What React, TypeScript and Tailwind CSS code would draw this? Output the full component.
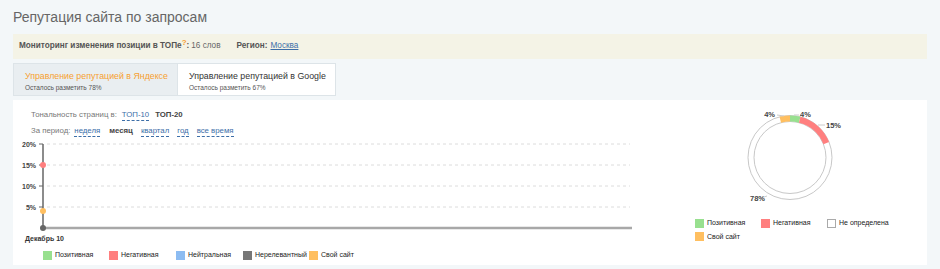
import React from "react";

const small = { fontFamily: '"Liberation Sans", Arial, sans-serif' };

const chartLegend = [
  { label: "Позитивная", color: "bg-[#98e08f]", w: "w-[66px]" },
  { label: "Негативная", color: "bg-[#ff7f7f]", w: "w-[67px]" },
  { label: "Нейтральная", color: "bg-[#8cbcf2]", w: "w-[67px]" },
  { label: "Нерелевантный", color: "bg-[#777777]", w: "w-[66px]" },
  { label: "Свой сайт", color: "bg-[#ffbf60]", w: "w-[65px]" },
];

function pt(cx: number, cy: number, r: number, deg: number) {
  const a = (deg * Math.PI) / 180;
  return [cx + r * Math.sin(a), cy - r * Math.cos(a)];
}

function arc(cx: number, cy: number, r: number, from: number, to: number) {
  const [x1, y1] = pt(cx, cy, r, from);
  const [x2, y2] = pt(cx, cy, r, to);
  const large = to - from > 180 ? 1 : 0;
  return `M ${x1} ${y1} A ${r} ${r} 0 ${large} 1 ${x2} ${y2}`;
}

function LineChart() {
  const grid = [
    { y: 6, label: "20%" },
    { y: 27, label: "15%" },
    { y: 48, label: "10%" },
    { y: 69, label: "5%" },
  ];
  return (
    <svg width="627" height="108" className="block" style={small}>
      {grid.map((g) => (
        <g key={g.label}>
          <line x1="34" x2="617" y1={g.y} y2={g.y} stroke="#dcdcdc" strokeDasharray="3 3" />
          <line x1="26" x2="30" y1={g.y} y2={g.y} stroke="#666" />
          <text x="23" y={g.y + 2.5} textAnchor="end" fontSize="7" fontWeight="bold" fill="#444">
            {g.label}
          </text>
        </g>
      ))}
      <line x1="30" x2="30" y1="6" y2="91" stroke="#666" strokeWidth="1.5" />
      <line x1="30" x2="619" y1="90" y2="90" stroke="#a8a8a8" strokeWidth="2.5" />
      <circle cx="30" cy="90" r="3" fill="#666" />
      <circle cx="30" cy="27" r="3" fill="#ff7f7f" />
      <circle cx="30" cy="73" r="3" fill="#ffbf60" />
      <text x="12" y="102.5" fontSize="7" fontWeight="bold" fill="#333">
        Декабрь 10
      </text>
    </svg>
  );
}

function Donut() {
  const cx = 95;
  const cy = 57.5;
  return (
    <svg width="232" height="110" className="block" style={small}>
      <circle cx={cx} cy={cy} r="42" fill="none" stroke="#c8c8c8" strokeWidth="1" />
      <circle cx={cx} cy={cy} r="36" fill="none" stroke="#c8c8c8" strokeWidth="1" />
      <path d={arc(cx, cy, 39, -14.4, 0)} fill="none" stroke="#ffbf60" strokeWidth="6" />
      <path d={arc(cx, cy, 39, 0, 14.4)} fill="none" stroke="#98e08f" strokeWidth="6" />
      <path d={arc(cx, cy, 39, 14.4, 68.4)} fill="none" stroke="#ff7f7f" strokeWidth="6" />
      <g stroke="#ccc" strokeWidth="1">
        <line x1="82" y1="15" x2="89" y2="16" />
        <line x1="99" y1="15" x2="104" y2="15" />
        <line x1="123" y1="25" x2="130" y2="25" />
        <line x1="66" y1="98" x2="72" y2="96" />
      </g>
      <g fontSize="7.5" fill="#444" fontWeight="bold">
        <text x="80" y="17" textAnchor="end">4%</text>
        <text x="105" y="17">4%</text>
        <text x="131" y="28">15%</text>
        <text x="55" y="101">78%</text>
      </g>
    </svg>
  );
}

function LegendItem({ label, color, outline }: { label: string; color: string; outline?: boolean }) {
  return (
    <div className="flex items-center gap-[3px]">
      <span className={`w-[9px] h-[9px] ${color} ${outline ? "border border-[#aaa]" : ""}`} />
      <span className="text-[7px] text-[#222] whitespace-nowrap">{label}</span>
    </div>
  );
}

const link = "text-[#3c6ea8] border-b border-dashed border-[#3c6ea8] leading-[10px]";

export default function App() {
  return (
    <div className="w-[940px] h-[269px] bg-[#f3f7f9] px-[13px] overflow-hidden" style={small}>
      <h1 className="pt-[7px] h-[34px] text-[14px] leading-[20px] text-[#666]">
        Репутация сайта по запросам
      </h1>

      <div className="w-[914px] h-[25px] bg-[#f4f3e6] flex items-center pl-[6px] text-[8.2px] text-[#555] whitespace-nowrap">
        <span className="font-bold">Мониторинг изменения позиции в ТОПе</span>
        <sup className="text-[#f7a030] font-bold text-[8px]">?</sup>
        <span className="font-bold">:</span>
        <span className="ml-[2px] text-[#666]">16 слов</span>
        <span className="ml-[16px] font-bold">Регион:</span>
        <span className="ml-[3px] text-[#3c6ea8] underline">Москва</span>
      </div>

      <div className="mt-[4px] flex h-[33px] whitespace-nowrap">
        <div className="w-[165px] bg-[#e9eef1] border border-[#dde4e8] pl-[11px] pt-[6px]">
          <div className="text-[8.8px] leading-[13px] text-[#f7a030]">
            Управление репутацией в Яндексе
          </div>
          <div className="text-[6.5px] leading-[9px] text-[#555]">Осталось разметить 78%</div>
        </div>
        <div className="w-[158px] bg-white border border-l-0 border-[#dde4e8] pl-[11px] pt-[6px]">
          <div className="text-[8.8px] leading-[13px] text-[#333]">
            Управление репутацией в Google
          </div>
          <div className="text-[6.5px] leading-[9px] text-[#555]">Осталось разметить 67%</div>
        </div>
      </div>

      <div className="mt-[4px] w-[914px] h-[165px] bg-white flex">
        <div className="w-[682px]">
          <div className="pt-[9px] pl-[18px]">
            <div className="h-[12px] flex items-center text-[7.8px] text-[#777] whitespace-nowrap">
              <span>Тональность страниц в:</span>
              <span className={`ml-[5px] ${link}`}>ТОП-10</span>
              <span className="ml-[6px] font-bold text-[#444]">ТОП-20</span>
            </div>
            <div className="mt-[4px] h-[12px] flex items-center text-[7.8px] text-[#777] whitespace-nowrap">
              <span>За период:</span>
              <span className={`ml-[4px] ${link}`}>неделя</span>
              <span className="ml-[9px] font-bold text-[#444]">месяц</span>
              <span className={`ml-[8px] ${link}`}>квартал</span>
              <span className={`ml-[8px] ${link}`}>год</span>
              <span className={`ml-[8px] ${link}`}>все время</span>
            </div>
          </div>
          <div className="mt-[1px]">
            <LineChart />
          </div>
          <div className="pl-[30px] mt-[4px] flex">
            {chartLegend.map((l) => (
              <div key={l.label} className={l.w}>
                <LegendItem label={l.label} color={l.color} />
              </div>
            ))}
          </div>
        </div>
        <div className="flex-1">
          <Donut />
          <div className="mt-[8px] grid grid-cols-[66px_66px_80px] gap-y-[3px]">
            <LegendItem label="Позитивная" color="bg-[#98e08f]" />
            <LegendItem label="Негативная" color="bg-[#ff7f7f]" />
            <LegendItem label="Не определена" color="bg-white" outline />
            <LegendItem label="Свой сайт" color="bg-[#ffbf60]" />
          </div>
        </div>
      </div>
    </div>
  );
}
